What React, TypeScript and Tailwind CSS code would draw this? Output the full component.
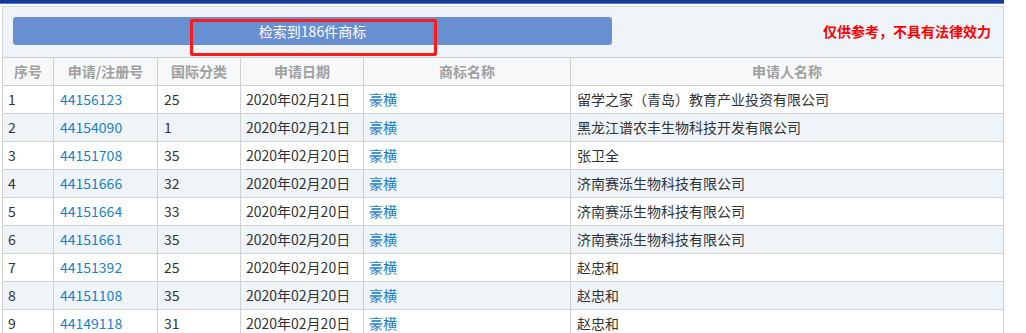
const rows = [
  ["1", "44156123", "25", "2020年02月21日", "豪横", "留学之家（青岛）教育产业投资有限公司"],
  ["2", "44154090", "1", "2020年02月21日", "豪横", "黑龙江谱农丰生物科技开发有限公司"],
  ["3", "44151708", "35", "2020年02月20日", "豪横", "张卫全"],
  ["4", "44151666", "32", "2020年02月20日", "豪横", "济南赛泺生物科技有限公司"],
  ["5", "44151664", "33", "2020年02月20日", "豪横", "济南赛泺生物科技有限公司"],
  ["6", "44151661", "35", "2020年02月20日", "豪横", "济南赛泺生物科技有限公司"],
  ["7", "44151392", "25", "2020年02月20日", "豪横", "赵忠和"],
  ["8", "44151108", "35", "2020年02月20日", "豪横", "赵忠和"],
  ["9", "44149118", "31", "2020年02月20日", "豪横", "赵忠和"],
];

const headers = ["序号", "申请/注册号", "国际分类", "申请日期", "商标名称", "申请人名称"];
const widths = ["w-[51px]", "w-[104px]", "w-[83px]", "w-[123px]", "w-[207px]", "w-[433px]"];

export default function App() {
  return (
    <div
      className="relative w-[1004px] bg-white text-[14px] text-[#333]"
      style={{ fontFamily: '"Microsoft YaHei", "Noto Sans CJK SC", sans-serif' }}
    >
      <div className="h-[3px] bg-[#17399a]" />
      <div className="h-[1px] bg-[#5677c4]" />
      <div className="ml-[2px] mt-[2px] border border-b-0 border-[#d3d7dc] bg-[#eff4f9]">
        <div className="flex items-center justify-between pl-[10px] pr-[12px] pt-[10px] pb-[12px]">
          <div className="flex h-[28px] w-[599px] items-center justify-center rounded-[3px] bg-[#678fd1] text-white">
            检索到186件商标
          </div>
          <div className="text-[14px] font-bold text-[#ff0000]">仅供参考，不具有法律效力</div>
        </div>
        <table className="w-[1001px] table-fixed border-collapse -ml-px">
          <colgroup>
            {widths.map((w, i) => (
              <col key={i} className={w} />
            ))}
          </colgroup>
          <thead>
            <tr className="h-[28px] bg-[#f6f8f9]">
              {headers.map((h) => (
                <th key={h} className="border border-[#d0d0d0] font-bold text-[#a0a0a0]">
                  {h}
                </th>
              ))}
            </tr>
          </thead>
          <tbody>
            {rows.map((r, i) => (
              <tr key={r[0]} className={`h-[28px] ${i % 2 === 1 ? "bg-[#eff4f9]" : "bg-white"}`}>
                <td className="border border-[#d0d0d0] pl-[5px]">{r[0]}</td>
                <td className="border border-[#d0d0d0] pl-[6px] text-[#1b7fc7]">{r[1]}</td>
                <td className="border border-[#d0d0d0] pl-[6px]">{r[2]}</td>
                <td className="border border-[#d0d0d0] pl-[5px]">{r[3]}</td>
                <td className="border border-[#d0d0d0] pl-[5px] text-[#1b7fc7]">{r[4]}</td>
                <td className="border border-[#d0d0d0] pl-[6px]">{r[5]}</td>
              </tr>
            ))}
          </tbody>
        </table>
      </div>
      <div className="absolute left-[190px] top-[19px] h-[37px] w-[247px] rounded-[2px] border-[3px] border-[#ff1a1a]" />
    </div>
  );
}
